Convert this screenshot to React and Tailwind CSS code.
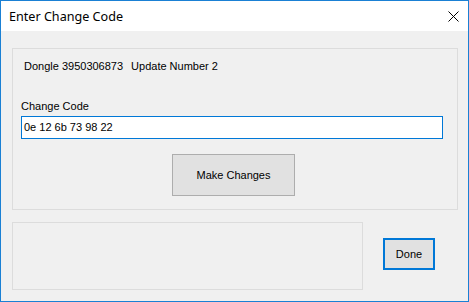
export default function App() {
  return (
    <div className="w-[469px] h-[302px] border border-[#1a80d4] flex flex-col bg-[#f0f0f0] font-['Liberation_Sans',Arial,sans-serif] text-[11px] leading-[13px] text-black">
      {/* title bar */}
      <div className="h-[30px] bg-white flex items-center justify-between shrink-0">
        <span className="ml-[8px] mt-[1px] font-['Noto_Sans',sans-serif] text-[12.6px] leading-[16px] text-black">
          Enter Change Code
        </span>
        <svg width="11" height="11" viewBox="0 0 11 11" className="mr-[9px] mt-[1px]">
          <path d="M0.5 0.5 L10.5 10.5 M10.5 0.5 L0.5 10.5" stroke="#000" strokeWidth="1" fill="none" />
        </svg>
      </div>

      {/* body */}
      <div className="flex-1 flex flex-col pl-[11px]">
        <div className="mt-[17px] w-[446px] h-[162px] border border-[#dcdcdc] flex flex-col px-[8px]">
          <div className="mt-[11px] ml-[3px] flex">
            <span>Dongle 3950306873</span>
            <span className="ml-[8px]">Update Number 2</span>
          </div>
          <div className="mt-[27px]">Change Code</div>
          <div className="mt-[3px] w-[422px] h-[23px] border border-[#0078d7] bg-white pl-[2px] pt-[4px]">
            0e 12 6b 73 98 22
          </div>
          <button className="mt-[15px] ml-[151px] w-[123px] h-[42px] border border-[#adadad] bg-[#e1e1e1] text-black flex items-center justify-center">
            Make Changes
          </button>
        </div>

        <div className="mt-[12px] flex">
          <div className="w-[351px] h-[68px] border border-[#dcdcdc]"></div>
          <button className="ml-[20px] mt-[16px] w-[52px] h-[32px] border-2 border-[#0078d7] bg-[#e1e1e1] text-black flex items-center justify-center">
            Done
          </button>
        </div>
      </div>
    </div>
  );
}
